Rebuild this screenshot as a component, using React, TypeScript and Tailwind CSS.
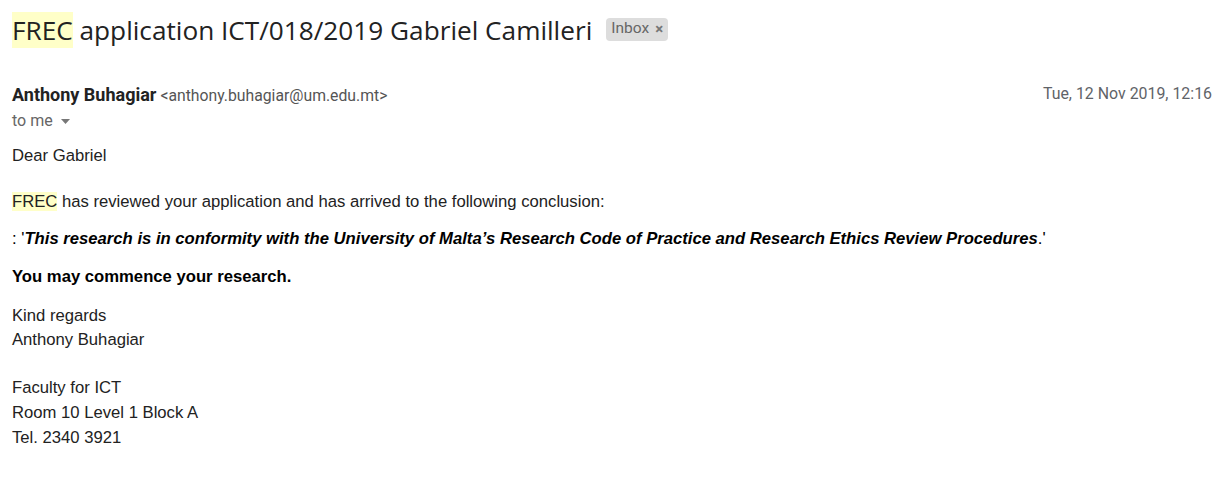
export default function App() {
  const body = { fontFamily: '"Liberation Sans", Arial, sans-serif' };
  const ui = { fontFamily: 'Roboto, "Liberation Sans", Arial, sans-serif' };

  return (
    <div className="min-h-screen bg-white pl-3 pr-[11px] text-[#222]">
      {/* Subject */}
      <div className="flex items-center pt-[13px]" style={{ fontFamily: '"Open Sans", Roboto, sans-serif' }}>
        <h1 className="h-[34px] text-[26.2px] leading-[34px] font-normal text-[#222]">
          <span className="bg-[#ffffc8]">FREC</span> application ICT/018/2019 Gabriel Camilleri
        </h1>
        <span
          className="ml-[14px] mt-[-2px] flex h-[23px] items-center gap-[6px] rounded-[4px] bg-[#dddddd] px-[5px] text-[15.5px] text-[#666]"
          style={ui}
        >
          Inbox
          <span className="text-[15px] font-bold text-[#777]">×</span>
        </span>
      </div>

      {/* Sender */}
      <div className="mt-[37px] flex h-5 items-center justify-between" style={ui}>
        <div className="flex items-baseline gap-[4px]">
          <span className="text-[18px] font-bold text-[#222]">Anthony Buhagiar</span>
          <span className="text-[15.75px] text-[#555]">&lt;anthony.buhagiar@um.edu.mt&gt;</span>
        </div>
        <span className="text-[15.9px] text-[#5f6368]">Tue, 12 Nov 2019, 12:16</span>
      </div>
      <div className="mt-[7px] flex h-5 items-center gap-[8px] text-[16px] text-[#666]" style={ui}>
        to me
        <svg width="9" height="5" viewBox="0 0 9 5" className="mt-[1px]">
          <path d="M0 0h9L4.5 5z" fill="#777" />
        </svg>
      </div>

      {/* Message body */}
      <div className="text-[16.67px] leading-6 text-[#222]" style={body}>
        <p className="mt-[13px]">Dear Gabriel</p>
        <p className="mt-[22px]">
          <span className="bg-[#ffffc8]">FREC</span> has reviewed your application and has arrived to the following
          conclusion:
        </p>
        <p className="mt-[13px] text-black">
          : '<b className="italic">This research is in conformity with the University of Malta’s Research Code of Practice and Research Ethics Review Procedures</b>.'
        </p>
        <p className="mt-[14px] font-bold text-black">You may commence your research.</p>
        <div className="mt-[15px]">
          <p>Kind regards</p>
          <p>Anthony Buhagiar</p>
          <p>&nbsp;</p>
          <p>Faculty for ICT</p>
          <p className="mt-px">Room 10 Level 1 Block A</p>
          <p className="mt-px">Tel. 2340 3921</p>
        </div>
      </div>
    </div>
  );
}
